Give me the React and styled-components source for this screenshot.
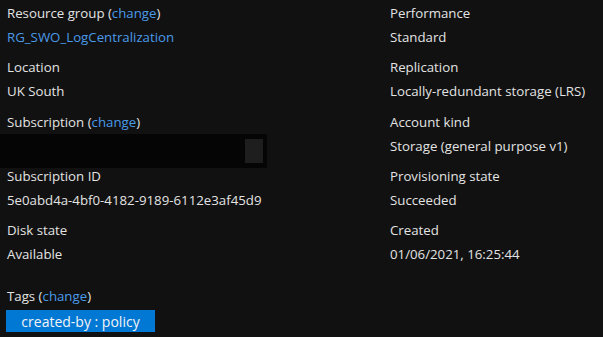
import React from 'react';
import styled, { createGlobalStyle } from 'styled-components';

const GlobalStyle = createGlobalStyle`
  html, body {
    margin: 0;
    padding: 0;
    background: #111111;
  }
`;

const Page = styled.div`
  width: 603px;
  height: 337px;
  overflow: hidden;
  background: #111111;
  color: #e3e3e3;
  font-family: 'Open Sans', 'Noto Sans', sans-serif;
  font-size: 13.25px;
  padding-top: 1px;
  box-sizing: border-box;
`;

const Grid = styled.div`
  display: grid;
  grid-template-columns: 383px 1fr;
  padding-left: 7px;
`;

const Column = styled.div`
  display: flex;
  flex-direction: column;
`;

const Field = styled.div`
  display: flex;
  flex-direction: column;
  margin-bottom: 6.3px;
`;

const Label = styled.div`
  line-height: 24px;
  white-space: nowrap;
`;

const Value = styled.div`
  line-height: 24px;
  white-space: nowrap;
  color: ${(p) => (p.link ? '#4a9ae8' : '#e3e3e3')};
`;

const Change = styled.span`
  color: #4a9ae8;
`;

const Redacted = styled.div`
  height: 34px;
  width: 267px;
  margin-left: -7px;
  margin-bottom: -10px;
  background: #050505;
  display: flex;
  justify-content: flex-end;
  align-items: center;
  padding-right: 4px;
  box-sizing: border-box;
`;

const RedactedChip = styled.div`
  width: 18px;
  height: 24px;
  background: #1e1e1e;
`;

const Tags = styled.div`
  padding-left: 7px;
  margin-top: 12px;
`;

const Tag = styled.div`
  display: flex;
  align-items: center;
  justify-content: center;
  width: 149px;
  height: 22px;
  margin-left: -1px;
  margin-top: 2px;
  background: #0078d4;
  color: #f4f4f4;
  font-size: 14px;
`;

const LabelWithChange = ({ children }) => (
  <Label>
    {children} (<Change>change</Change>)
  </Label>
);

export default function App() {
  return (
    <Page>
      <GlobalStyle />
      <Grid>
        <Column>
          <Field>
            <LabelWithChange>Resource group</LabelWithChange>
            <Value link>RG_SWO_LogCentralization</Value>
          </Field>
          <Field>
            <Label>Location</Label>
            <Value>UK South</Value>
          </Field>
          <Field>
            <LabelWithChange>Subscription</LabelWithChange>
            <Redacted>
              <RedactedChip />
            </Redacted>
          </Field>
          <Field>
            <Label>Subscription ID</Label>
            <Value>5e0abd4a-4bf0-4182-9189-6112e3af45d9</Value>
          </Field>
          <Field>
            <Label>Disk state</Label>
            <Value>Available</Value>
          </Field>
        </Column>
        <Column>
          <Field>
            <Label>Performance</Label>
            <Value>Standard</Value>
          </Field>
          <Field>
            <Label>Replication</Label>
            <Value>Locally-redundant storage (LRS)</Value>
          </Field>
          <Field>
            <Label>Account kind</Label>
            <Value>Storage (general purpose v1)</Value>
          </Field>
          <Field>
            <Label>Provisioning state</Label>
            <Value>Succeeded</Value>
          </Field>
          <Field>
            <Label>Created</Label>
            <Value>01/06/2021, 16:25:44</Value>
          </Field>
        </Column>
      </Grid>
      <Tags>
        <LabelWithChange>Tags</LabelWithChange>
        <Tag>created-by : policy</Tag>
      </Tags>
    </Page>
  );
}
